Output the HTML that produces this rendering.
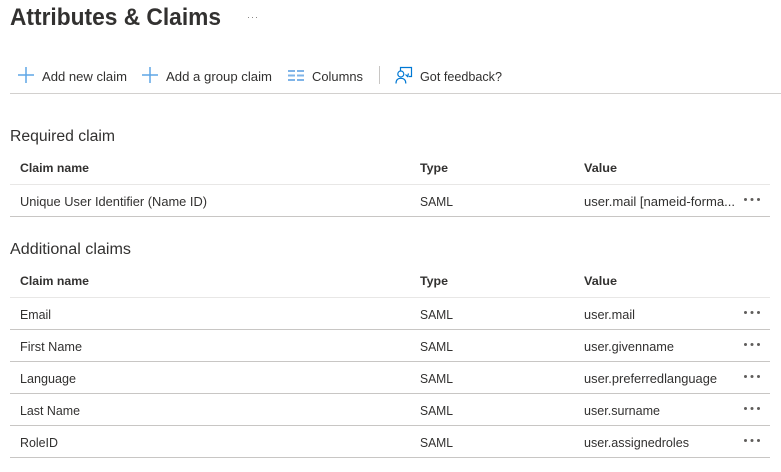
<!DOCTYPE html>
<html><head><meta charset="utf-8"><style>
html,body{margin:0;padding:0;background:#fff;width:781px;height:472px;overflow:hidden}
svg{display:block}
text{font-family:"Liberation Sans",sans-serif;fill:#323130;font-size:12.5px}
.h{font-weight:bold;font-size:12px}
.s{font-size:15.5px}
</style></head><body>
<svg width="781" height="472" viewBox="0 0 781 472" xmlns="http://www.w3.org/2000/svg">
<text x="10" y="25" style="font-size:24px;font-weight:bold" textLength="211" lengthAdjust="spacingAndGlyphs">Attributes &amp; Claims</text>
<g fill="#8a8886"><rect x="248" y="17" width="1" height="1"/><rect x="252" y="17" width="1" height="1"/><rect x="256" y="17" width="1" height="1"/></g>

<g stroke="#5ea6e6" stroke-width="1.5" fill="none">
<path d="M18 75H34M26 67V83"/>
<path d="M142 75H158M150 67V83"/>
</g>
<g fill="#7fb4e8">
<rect x="288" y="70" width="7" height="2"/><rect x="288" y="74.500" width="7" height="2"/><rect x="288" y="79" width="7" height="2"/>
<rect x="297" y="70" width="7" height="2"/><rect x="297" y="74.500" width="7" height="2"/><rect x="297" y="79" width="7" height="2"/>
</g>
<rect x="379" y="66" width="1" height="18" fill="#c8c6c4"/>
<g stroke="#0078d4" stroke-width="1.2" fill="none">
<path d="M400.500 70.500V67.500H411.500V76.500H408.500"/>
<circle cx="400.800" cy="74" r="3"/>
<path d="M396 83.500C396 79.800 398 78.300 400.800 78.300C403.600 78.300 405.800 79.800 405.800 83.500"/>
<path d="M405.500 74.500L407.500 76.500L408.500 73.500"/>
</g>
<text x="42" y="81" textLength="85" lengthAdjust="spacingAndGlyphs">Add new claim</text>
<text x="166" y="81" textLength="106" lengthAdjust="spacingAndGlyphs">Add a group claim</text>
<text x="312" y="81" textLength="51" lengthAdjust="spacingAndGlyphs">Columns</text>
<text x="420" y="81" textLength="82" lengthAdjust="spacingAndGlyphs">Got feedback?</text>
<rect x="10" y="93" width="771" height="1" fill="#d2d0ce"/>

<text class="s" x="10" y="141" textLength="105" lengthAdjust="spacingAndGlyphs">Required claim</text>
<text class="h" x="20" y="172" textLength="69" lengthAdjust="spacingAndGlyphs">Claim name</text>
<text class="h" x="420" y="172" textLength="28" lengthAdjust="spacingAndGlyphs">Type</text>
<text class="h" x="584" y="172" textLength="33" lengthAdjust="spacingAndGlyphs">Value</text>
<rect x="10" y="184" width="760" height="1" fill="#e8e7e6"/>
<text x="20" y="206" textLength="187" lengthAdjust="spacingAndGlyphs">Unique User Identifier (Name ID)</text>
<text x="420" y="206" textLength="33" lengthAdjust="spacingAndGlyphs">SAML</text>
<text x="584" y="206" textLength="151" lengthAdjust="spacingAndGlyphs">user.mail [nameid-forma...</text>
<rect x="10" y="216" width="760" height="1" fill="#c8c6c4"/>

<text class="s" x="10" y="254" textLength="121" lengthAdjust="spacingAndGlyphs">Additional claims</text>
<text class="h" x="20" y="285" textLength="69" lengthAdjust="spacingAndGlyphs">Claim name</text>
<text class="h" x="420" y="285" textLength="28" lengthAdjust="spacingAndGlyphs">Type</text>
<text class="h" x="584" y="285" textLength="33" lengthAdjust="spacingAndGlyphs">Value</text>
<rect x="10" y="297" width="760" height="1" fill="#e8e7e6"/>

<text x="20" y="319" textLength="31" lengthAdjust="spacingAndGlyphs">Email</text>
<text x="420" y="319" textLength="33" lengthAdjust="spacingAndGlyphs">SAML</text>
<text x="584" y="319" textLength="51" lengthAdjust="spacingAndGlyphs">user.mail</text>
<rect x="10" y="329" width="760" height="1" fill="#c8c6c4"/>

<text x="20" y="351" textLength="62" lengthAdjust="spacingAndGlyphs">First Name</text>
<text x="420" y="351" textLength="33" lengthAdjust="spacingAndGlyphs">SAML</text>
<text x="584" y="351" textLength="90" lengthAdjust="spacingAndGlyphs">user.givenname</text>
<rect x="10" y="361" width="760" height="1" fill="#c8c6c4"/>

<text x="20" y="383" textLength="56" lengthAdjust="spacingAndGlyphs">Language</text>
<text x="420" y="383" textLength="33" lengthAdjust="spacingAndGlyphs">SAML</text>
<text x="584" y="383" textLength="133" lengthAdjust="spacingAndGlyphs">user.preferredlanguage</text>
<rect x="10" y="393" width="760" height="1" fill="#c8c6c4"/>

<text x="20" y="415" textLength="60" lengthAdjust="spacingAndGlyphs">Last Name</text>
<text x="420" y="415" textLength="33" lengthAdjust="spacingAndGlyphs">SAML</text>
<text x="584" y="415" textLength="76" lengthAdjust="spacingAndGlyphs">user.surname</text>
<rect x="10" y="425" width="760" height="1" fill="#c8c6c4"/>

<text x="20" y="447" textLength="38" lengthAdjust="spacingAndGlyphs">RoleID</text>
<text x="420" y="447" textLength="33" lengthAdjust="spacingAndGlyphs">SAML</text>
<text x="584" y="447" textLength="105" lengthAdjust="spacingAndGlyphs">user.assignedroles</text>
<rect x="10" y="457" width="760" height="1" fill="#c8c6c4"/>

<g fill="#605e5c">
<circle cx="745.500" cy="199.500" r="1.500"/><circle cx="752" cy="199.500" r="1.500"/><circle cx="758.500" cy="199.500" r="1.500"/>
<circle cx="745.500" cy="312.500" r="1.500"/><circle cx="752" cy="312.500" r="1.500"/><circle cx="758.500" cy="312.500" r="1.500"/>
<circle cx="745.500" cy="344.500" r="1.500"/><circle cx="752" cy="344.500" r="1.500"/><circle cx="758.500" cy="344.500" r="1.500"/>
<circle cx="745.500" cy="376.500" r="1.500"/><circle cx="752" cy="376.500" r="1.500"/><circle cx="758.500" cy="376.500" r="1.500"/>
<circle cx="745.500" cy="408.500" r="1.500"/><circle cx="752" cy="408.500" r="1.500"/><circle cx="758.500" cy="408.500" r="1.500"/>
<circle cx="745.500" cy="440.500" r="1.500"/><circle cx="752" cy="440.500" r="1.500"/><circle cx="758.500" cy="440.500" r="1.500"/>
</g>
</svg>
</body></html>
